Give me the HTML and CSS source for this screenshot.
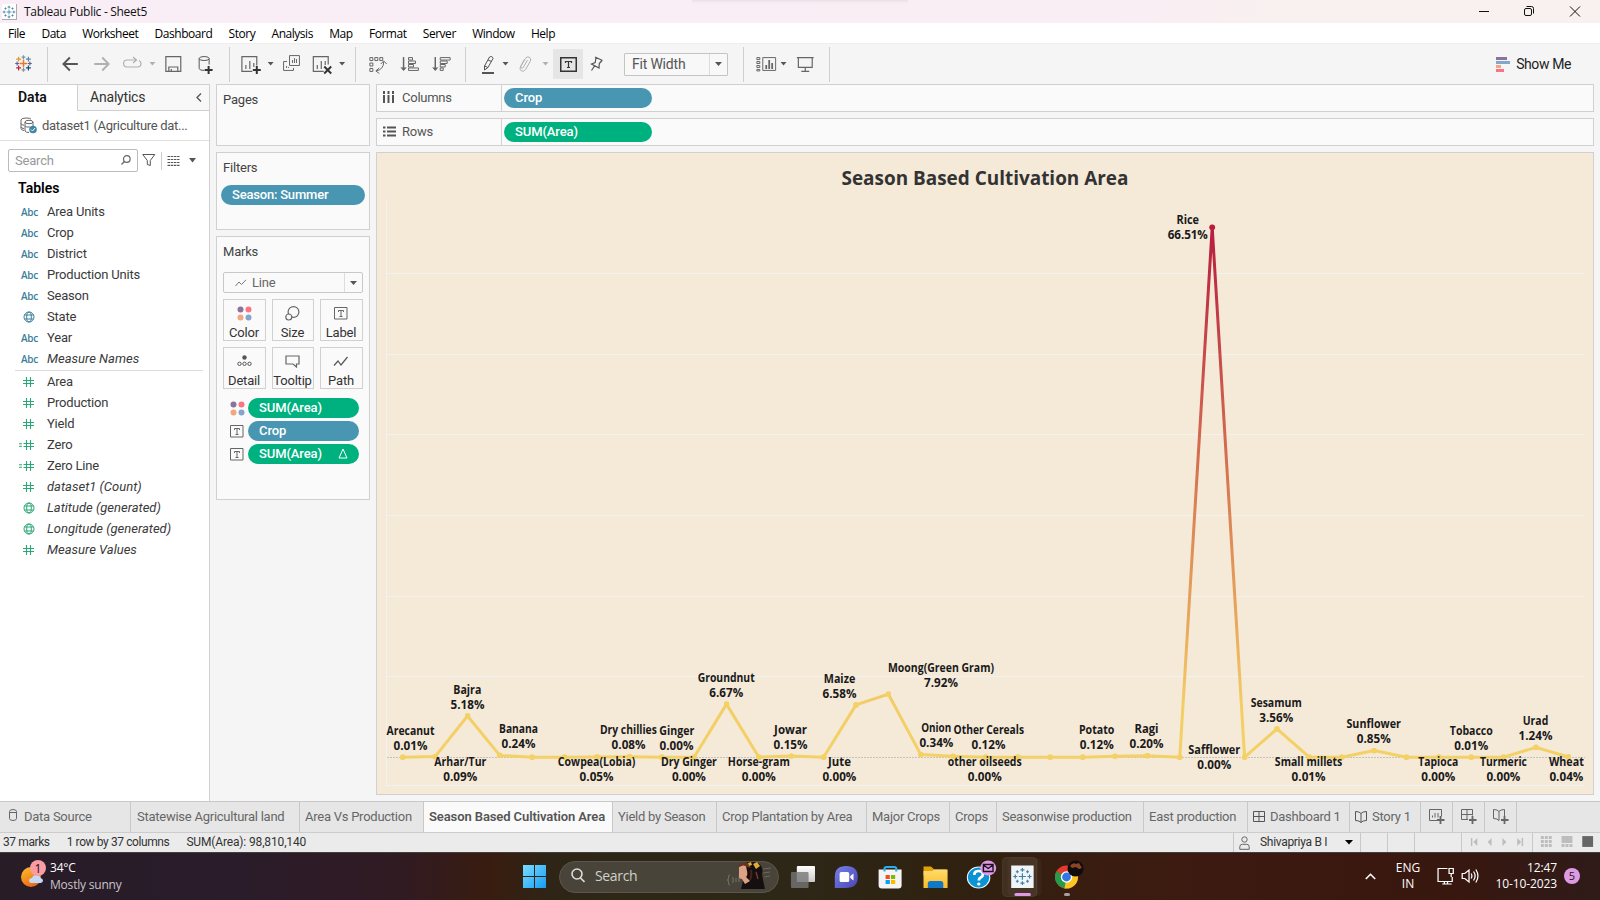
FILE: index.html
```html
<!DOCTYPE html>
<html lang="en">
<head>
<meta charset="utf-8">
<title>Tableau Public - Sheet5</title>
<link rel="stylesheet" href="styles.css">
</head>
<body>
<svg class="defs" width="0" height="0" aria-hidden="true">
  <defs>
    <symbol id="globe" viewBox="0 0 12 12"><g fill="none" stroke="currentColor" stroke-width="1"><circle cx="6" cy="6" r="5"/><ellipse cx="6" cy="6" rx="2.3" ry="5"/><path d="M1.5 4h9M1.5 8h9"/></g></symbol>
    <symbol id="hash" viewBox="0 0 16 12"><path d="M7.5 1v10M11.5 1v10M4 4.500h11M4 7.500h11" fill="none" stroke="currentColor" stroke-width="1.1"/></symbol>
    <symbol id="eqhash" viewBox="0 0 16 12"><path d="M7.500 1v10M11.500 1v10M4.500 4.500h10.500M4.500 7.500h10.500M0 4.800h3M0 7.200h3" fill="none" stroke="currentColor" stroke-width="1.100"/></symbol>
    <symbol id="dots4" viewBox="0 0 15 15"><circle cx="3.500" cy="3.500" r="3" fill="#8b7399"/><circle cx="11.500" cy="3.500" r="3" fill="#fc7384"/><circle cx="3.500" cy="11.500" r="3" fill="#f2a77e"/><circle cx="11.500" cy="11.500" r="3" fill="#84a5cd"/></symbol>
    <symbol id="tbox" viewBox="0 0 14 13"><path d="M.5.500h12.500v11.500H.5zM4.500 5V3.500h5V5M7 3.500v6M5.500 9.500h3" fill="none" stroke="#666"/></symbol>
    <symbol id="cluster" viewBox="0 0 20 20"><path d="M10 6.500v7M6.500 10h7M10 1v4M8 3h4M10 15v4M8 17h4M3 8v4M1 10h4M17 8v4M15 10h4M5 3.500v3M3.500 5h3M15 3.500v3M13.500 5h3M5 13.500v3M3.500 15h3M15 13.500v3M13.500 15h3" stroke="#3f83a8" stroke-width="1.200" fill="none"/></symbol>
  </defs>
</svg>

<header class="titlebar">
  <span class="app-icon"><svg width="14" height="14"><use href="#cluster"/></svg></span>
  <span class="app-title">Tableau Public - Sheet5</span>
  <i class="snap-hint"></i>
  <svg class="win-controls" width="120" height="22" viewBox="1470 0 120 22" fill="none" stroke="#111">
    <path d="M1479 10.500h10M1570 5.500l10 10M1580 5.500l-10 10"/><rect x="1524.500" y="7.500" width="7" height="7" rx="1.500"/><path d="M1526.500 5.500h5q2 0 2 2v5"/>
  </svg>
</header>
<nav class="menubar"><span>File</span><span>Data</span><span>Worksheet</span><span>Dashboard</span><span>Story</span><span>Analysis</span><span>Map</span><span>Format</span><span>Server</span><span>Window</span><span>Help</span></nav>

<div class="toolbar">
  <svg class="tool-group" width="48" height="35" viewBox="-.5 47 48 35" fill="none" stroke-width="1.200">
    <path d="M23.500 59.500v8M19.500 63.500h8" stroke="#e8762c" stroke-width="1.500"/>
    <path d="M23.500 55v4M21.500 57h4" stroke="#7099a6"/><path d="M23.500 68v4M21.500 70h4" stroke="#7099a6"/>
    <path d="M17 61.500v4M15 63.500h4M30 61.500v4M28 63.500h4" stroke="#5b6591"/>
    <path d="M18.500 56.500v5M16 59h5" stroke="#eb9129"/><path d="M28.500 56.500v5M26 59h5" stroke="#59879b"/>
    <path d="M18.500 65.500v5M16 68h5" stroke="#c72035"/><path d="M28.500 65.500v5M26 68h5" stroke="#1f447e"/>
  </svg>
  <svg class="tool-group" width="182" height="35" viewBox="48 47 182 35" fill="none" stroke="#555">
    <path d="M78 64H63.500M70 57.500L63.500 64l6.500 6.500" stroke-width="1.900"/>
    <path d="M94.500 64h14.500M102.500 57.500l6.500 6.500-6.500 6.500" stroke="#b0b0b0" stroke-width="1.900"/>
    <path d="M137 60h-9.500q-3.500 0-3.500 3.500t3.500 3.500H138q3.500 0 3.500-3.500 0-2-2-3M133.500 57l3.500 3-3.500 3" stroke="#b0b0b0" stroke-width="1.200"/>
    <path d="M150 62h6l-3 3.500z" fill="#b0b0b0" stroke="none"/>
    <path d="M166.500 56.500h15v15h-15zM169.500 71.500v-4.500h9v4.500M172 69v2.500" stroke="#666" stroke-width="1.200"/>
    <ellipse cx="205" cy="58.500" rx="5" ry="2"/><path d="M200 58.500v10q0 2 5 2M210 58.500v6"/><path d="M209.500 66v8M205.500 70h8" stroke="#333" stroke-width="2"/>
  </svg>
  <svg class="tool-group" width="126" height="35" viewBox="229.500 47 126 35" fill="none" stroke="#666">
    <path d="M252 71.500h-10.500v-15h15v9M245.500 65v4M249.500 61v8M253.500 63v4" stroke-width="1.200"/><path d="M256.500 66v8M252.500 70h8" stroke="#333" stroke-width="2"/>
    <path d="M267.500 62h6l-3 3.500zM339.500 62h6l-3 3.500z" fill="#555" stroke="none"/>
    <path d="M289.500 55.500h10v10h-10zM292.500 60v3M294.500 58v5M296.500 59v4M287 61.500h-3.500v9h10V68M286.500 66v2M288.500 67v1"/>
    <path d="M324 71.500h-10.500v-15h15v8M317.500 65v4M321.500 61v8M325.500 61v4" stroke-width="1.200"/><path d="M324.500 66.500l7 7M331.500 66.500l-7 7" stroke="#333" stroke-width="2"/>
  </svg>
  <svg class="tool-group" width="110" height="35" viewBox="355.500 47 110 35" fill="none" stroke="#666">
    <path d="M369.500 57.500h3v3h-3zM374.500 57.500h3v3h-3zM379.500 57.500h3v3h-3zM369.500 63h3v3h-3zM369.500 68.500h3v3h-3zM383.500 61.500q0 8-7.500 9.500M380.500 64l3-3 3 3M379 68l-3.500 3 3.500 2.500"/>
    <path d="M403.500 57v12" stroke-width="1.500"/><path d="M401 67.500l2.500 3 2.500-3" fill="#666"/>
    <path d="M408.500 57.500h4v2.500h-4zM408.500 61h7v2.500h-7zM408.500 64.500h5v2.500h-5zM408.500 68h10v2.500h-10z"/>
    <path d="M435.500 57v12" stroke-width="1.500"/><path d="M433 67.500l2.500 3 2.500-3" fill="#666"/>
    <path d="M440.500 57.500h10v2.500h-10zM440.500 61h7v2.500h-7zM440.500 64.500h5v2.500h-5zM440.500 68h3v2.500h-3z"/>
  </svg>
  <svg class="tool-group" width="86" height="35" viewBox="466 47 86 35" fill="none" stroke="#555">
    <path d="M484.500 66l5-9q3-1.500 3.500 1.500l-5 9-3.500 2.500zM484.500 66l3.500 1.500M488 60l3.500 1.500"/><path d="M482 73h12" stroke-width="2"/>
    <path d="M502.500 62h6l-3 3.500z" fill="#555" stroke="none"/><path d="M542.500 62h6l-3 3.500z" fill="#b0b0b0" stroke="none"/>
    <path d="M527.500 60l-4 7q-1 2-2.200 1-1-1 0-2.500l4-7q1.800-2.500 4-1.300 2.200 1.500 1 4l-4.500 8q-2 3-4.500 1.700-2.200-1.500-.8-4.400l4-7" stroke="#b0b0b0"/>
  </svg>
  <div class="tool-pressed"><svg width="17" height="15" viewBox="0 0 17 15" fill="none" stroke="#333"><path d="M.75.750h15.500v13.500H.75z" stroke-width="1.500"/><path d="M5.500 6V4.500h6V6M8.500 4.500v6M7 10.500h3" stroke-width="1.200"/></svg></div>
  <svg class="tool-pin" width="14" height="16" viewBox="0 0 14 16" fill="none" stroke="#555"><path d="M5 1l7.500 3.500M6 1.500l-.8 5L1.500 8l7.500 4 .3-4.500L12 4.500M4.500 10L1.500 14.500" stroke-width="1.200"/></svg>
  <div class="fit-select"><span>Fit Width</span><b><svg width="7" height="4"><path d="M0 0h7l-3.500 4z" fill="#555"/></svg></b></div>
  <i class="tool-sep"></i>
  <svg class="tool-group" width="86" height="35" viewBox="743.5 47 86 35" fill="none" stroke="#666">
    <path d="M756.500 57.500h3v2h-3zM756.500 61.500h3v2h-3zM756.500 65.500h3v2h-3zM756.500 69.500h3v1.500h-3zM762.500 57.500h13v13h-13z"/><path d="M766 65v4M769 60v9M772 63v6" stroke-width="1.800"/>
    <path d="M780.500 62h6l-3 3.500z" fill="#555" stroke="none"/>
    <path d="M797 57.500h17M798.500 58v9.500h14V58M805.500 67.500v4M801.500 71.500h8" stroke-width="1.200"/>
  </svg>
  <div class="show-me"><svg width="14" height="15"><path d="M0 0h11v3H0z" fill="#8b7399"/><path d="M0 4h14v3H0z" fill="#84a5cd"/><path d="M0 8h5v3H0z" fill="#f2a77e"/><path d="M0 12h8v3H0z" fill="#fc7384"/></svg><span>Show Me</span></div>
</div>

<main class="workspace">
  <aside class="data-pane">
    <div class="pane-tabs"><b>Data</b><div><span>Analytics</span><svg width="6" height="9"><path d="M5 .5L1 4.500l4 4" fill="none" stroke="#555" stroke-width="1.300"/></svg></div></div>
    <div class="dataset">
      <svg width="18" height="17" viewBox="0 0 18 17" fill="none" stroke="#666"><path d="M4 13.500q-3-.3-3-2V2.800M1 3q0-2 5-2t5 1.200M1 6.500q0 1.500 3 1.700M1 10q0 1.300 3 1.500"/><ellipse cx="9" cy="5" rx="4" ry="1.700"/><path d="M5 5v9q1 1.500 4 1.500M13 5v4M5 9q1 1.500 5 1"/><circle cx="13" cy="12.500" r="3.800" fill="#3c87a5" stroke="none"/><path d="M11 12.500l1.500 1.500 2.500-3" stroke="#fff"/></svg>
      <span>dataset1 (Agriculture dat...</span>
    </div>
    <div class="search-row">
      <div class="search-box"><span>Search</span><svg width="10" height="11" fill="none" stroke="#666" stroke-width="1.200"><circle cx="5.800" cy="4" r="3.300"/><path d="M3.300 6.500L.5 9.500"/></svg></div>
      <svg width="14" height="13" fill="none" stroke="#555"><path d="M.8.500h12L8.300 6.500v5L5.300 10.500v-4z"/></svg>
      <i></i>
      <svg width="13" height="10"><path d="M.5.500h12M.5 3.500h12M.5 6.500h12M.5 9.300h12" stroke="#555" stroke-width="1.200" stroke-dasharray="2.500 .7"/></svg>
      <svg width="7" height="5"><path d="M0 0h7l-3.500 4.500z" fill="#555"/></svg>
    </div>
    <h3>Tables</h3>
    <ul class="fields dims">
      <li><b>Abc</b>Area Units</li><li><b>Abc</b>Crop</li><li><b>Abc</b>District</li><li><b>Abc</b>Production Units</li><li><b>Abc</b>Season</li>
      <li><svg class="gl"><use href="#globe"/></svg>State</li><li><b>Abc</b>Year</li><li class="it"><b>Abc</b>Measure Names</li>
    </ul>
    <ul class="fields measures">
      <li><svg class="ha"><use href="#hash"/></svg>Area</li><li><svg class="ha"><use href="#hash"/></svg>Production</li><li><svg class="ha"><use href="#hash"/></svg>Yield</li>
      <li><svg class="ha"><use href="#eqhash"/></svg>Zero</li><li><svg class="ha"><use href="#eqhash"/></svg>Zero Line</li>
      <li class="it"><svg class="ha"><use href="#hash"/></svg>dataset1 (Count)</li><li class="it"><svg class="gl"><use href="#globe"/></svg>Latitude (generated)</li><li class="it"><svg class="gl"><use href="#globe"/></svg>Longitude (generated)</li><li class="it"><svg class="ha"><use href="#hash"/></svg>Measure Values</li>
    </ul>
  </aside>

  <section class="cards">
    <div class="card pages"><h4>Pages</h4></div>
    <div class="card filters"><h4>Filters</h4><span class="pill blue">Season: Summer</span></div>
    <div class="card marks">
      <h4>Marks</h4>
      <div class="mark-type"><svg width="12" height="8"><path d="M.5 7L4 3l2.500 2.500L11 .8" fill="none" stroke="#777"/></svg><span>Line</span><b><svg width="7" height="4"><path d="M0 0h7l-3.500 4z" fill="#555"/></svg></b></div>
      <div class="mark-grid">
        <div><svg width="15" height="15"><use href="#dots4"/></svg><span>Color</span></div>
        <div><svg width="15" height="15" fill="none" stroke="#666" stroke-width="1.200"><circle cx="8.500" cy="6" r="5.400"/><circle cx="3.800" cy="11" r="3" fill="#fafafa"/></svg><span>Size</span></div>
        <div><svg width="14" height="13"><use href="#tbox"/></svg><span>Label</span></div>
        <div><svg width="15" height="12" fill="none" stroke="#555"><circle cx="7.500" cy="2.500" r="2.200" fill="#555" stroke="none"/><circle cx="2.500" cy="8.800" r="1.700"/><circle cx="7.500" cy="8.800" r="1.700"/><circle cx="12.500" cy="8.800" r="1.700"/></svg><span>Detail</span></div>
        <div><svg width="15" height="13" fill="none" stroke="#666" stroke-width="1.200"><path d="M1 1h13v8h-2.500v3L8 9H1z"/></svg><span>Tooltip</span></div>
        <div><svg width="16" height="11"><path d="M1 9.500l4-4.500 3 4 6.500-8" fill="none" stroke="#555" stroke-width="1.200"/></svg><span>Path</span></div>
      </div>
      <div class="mark-pills">
        <svg width="15" height="15"><use href="#dots4"/></svg><span class="pill green">SUM(Area)</span>
        <svg width="14" height="13"><use href="#tbox"/></svg><span class="pill blue">Crop</span>
        <svg width="14" height="13"><use href="#tbox"/></svg><span class="pill green">SUM(Area)<svg width="10" height="11"><path d="M1 10L5 1l4 9z" fill="none" stroke="#fff"/></svg></span>
      </div>
    </div>
  </section>

  <section class="view">
    <div class="shelf"><div class="shelf-name"><svg width="11" height="13"><path d="M1 0v3M1 4v8M5.500 0v3M5.500 4v8M10 0v3M10 4v8" stroke="#555" stroke-width="2"/></svg>Columns</div><span class="pill blue">Crop</span></div>
    <div class="shelf"><div class="shelf-name rows"><svg width="13" height="11"><path d="M0 1.500h2.500M4 1.500h9M0 5.500h2.500M4 5.500h9M0 9.500h2.500M4 9.500h9" stroke="#555" stroke-width="2"/></svg>Rows</div><span class="pill green">SUM(Area)</span></div>
    <div class="viz">
      <svg class="chart" width="1216" height="641" viewBox="377 153 1216 641">
        <defs>
          <linearGradient id="heat" gradientUnits="userSpaceOnUse" x1="0" y1="757" x2="0" y2="227"><stop offset="0" stop-color="#f4d166"/><stop offset=".1" stop-color="#f3cd65"/><stop offset=".25" stop-color="#e8a95c"/><stop offset=".5" stop-color="#d97c52"/><stop offset=".75" stop-color="#c84b49"/><stop offset="1" stop-color="#b71d3e"/></linearGradient>
          <marker id="dot" markerUnits="userSpaceOnUse" markerWidth="6" markerHeight="6" refX="3" refY="3"><circle cx="3" cy="3" r="2.900" fill="#f4d166"/></marker>
        </defs>
        <text class="viz-title" x="985" y="185" textLength="287" lengthAdjust="spacingAndGlyphs">Season Based Cultivation Area</text>
        <path class="grid" d="M386.500 200V785.500H1585M387 273.500H1585M387 354.500H1585M387 434.500H1585M387 515.500H1585M387 596.500H1585M387 676.500H1585"/>
        <path class="zero" d="M387 757.500H1585"/>
        <polyline class="series" stroke="url(#heat)" marker-start="url(#dot)" marker-mid="url(#dot)" marker-end="url(#dot)" points="402.700,757.200 435.100,756.600 467.500,716 499.800,755.400 532.200,757.200 564.600,757.200 597,756.900 629.400,756.700 661.700,757.200 694.100,757.200 726.500,704.100 758.900,757.200 791.300,756.100 823.600,757.200 856,704.900 888.400,694.200 920.800,754.600 953.200,756.300 985.500,757.200 1017.900,757.200 1050.300,757.200 1082.700,757.200 1115,756.300 1147.400,755.700 1179.800,757.200 1212.200,227.300 1244.600,757.200 1277,728.900 1309.300,757.200 1341.700,757.200 1374.100,750.500 1406.500,757.200 1438.900,757.200 1471.200,757.200 1503.600,757.200 1536,747.400 1568.400,757"/>
        <circle cx="1212.200" cy="227.300" r="2.900" fill="#b71d3e"/>
        <g class="labels">
          <text x="410.500" y="735" textLength="48" lengthAdjust="spacingAndGlyphs">Arecanut</text><text x="410.500" y="750" textLength="34">0.01%</text>
          <text x="467.300" y="694" textLength="28" lengthAdjust="spacingAndGlyphs">Bajra</text><text x="467.500" y="709" textLength="34">5.18%</text>
          <text x="460.300" y="766" textLength="52" lengthAdjust="spacingAndGlyphs">Arhar/Tur</text><text x="460.300" y="781" textLength="34">0.09%</text>
          <text x="518.500" y="733" textLength="39" lengthAdjust="spacingAndGlyphs">Banana</text><text x="518.500" y="748" textLength="34">0.24%</text>
          <text x="596.600" y="766" textLength="77.500" lengthAdjust="spacingAndGlyphs">Cowpea(Lobia)</text><text x="596.600" y="781" textLength="34">0.05%</text>
          <text x="628.400" y="734" textLength="57" lengthAdjust="spacingAndGlyphs">Dry chillies</text><text x="628.600" y="749" textLength="34">0.08%</text>
          <text x="676.800" y="735" textLength="35" lengthAdjust="spacingAndGlyphs">Ginger</text><text x="676.500" y="750" textLength="34">0.00%</text>
          <text x="688.900" y="766" textLength="56" lengthAdjust="spacingAndGlyphs">Dry Ginger</text><text x="688.900" y="781" textLength="34">0.00%</text>
          <text x="726.200" y="682" textLength="57" lengthAdjust="spacingAndGlyphs">Groundnut</text><text x="726.200" y="697" textLength="34">6.67%</text>
          <text x="758.800" y="766" textLength="62" lengthAdjust="spacingAndGlyphs">Horse-gram</text><text x="758.800" y="781" textLength="34">0.00%</text>
          <text x="790.600" y="734" textLength="33" lengthAdjust="spacingAndGlyphs">Jowar</text><text x="790.600" y="749" textLength="34">0.15%</text>
          <text x="839.400" y="766" textLength="23" lengthAdjust="spacingAndGlyphs">Jute</text><text x="839.400" y="781" textLength="34">0.00%</text>
          <text x="839.500" y="683" textLength="31.500" lengthAdjust="spacingAndGlyphs">Maize</text><text x="839.500" y="698" textLength="34">6.58%</text>
          <text x="941" y="672" textLength="106" lengthAdjust="spacingAndGlyphs">Moong(Green Gram)</text><text x="941" y="687" textLength="34">7.92%</text>
          <text x="936.200" y="732" textLength="30" lengthAdjust="spacingAndGlyphs">Onion</text><text x="936.400" y="747" textLength="34">0.34%</text>
          <text x="988.800" y="734" textLength="70.500" lengthAdjust="spacingAndGlyphs">Other Cereals</text><text x="988.500" y="749" textLength="34">0.12%</text>
          <text x="984.700" y="766" textLength="74" lengthAdjust="spacingAndGlyphs">other oilseeds</text><text x="984.700" y="781" textLength="34">0.00%</text>
          <text x="1096.700" y="734" textLength="35.500" lengthAdjust="spacingAndGlyphs">Potato</text><text x="1096.700" y="749" textLength="34">0.12%</text>
          <text x="1146.500" y="733" textLength="24" lengthAdjust="spacingAndGlyphs">Ragi</text><text x="1146.500" y="748" textLength="34">0.20%</text>
          <text x="1187.800" y="224" textLength="22.500" lengthAdjust="spacingAndGlyphs">Rice</text><text x="1187.800" y="239" textLength="40">66.51%</text>
          <text x="1214.300" y="754" textLength="52" lengthAdjust="spacingAndGlyphs">Safflower</text><text x="1214.300" y="769" textLength="34">0.00%</text>
          <text x="1276.200" y="707" textLength="51" lengthAdjust="spacingAndGlyphs">Sesamum</text><text x="1276.200" y="722" textLength="34">3.56%</text>
          <text x="1308.600" y="766" textLength="67.500" lengthAdjust="spacingAndGlyphs">Small millets</text><text x="1308.600" y="781" textLength="34">0.01%</text>
          <text x="1373.700" y="728" textLength="54.500" lengthAdjust="spacingAndGlyphs">Sunflower</text><text x="1373.700" y="743" textLength="34">0.85%</text>
          <text x="1438.300" y="766" textLength="40" lengthAdjust="spacingAndGlyphs">Tapioca</text><text x="1438.300" y="781" textLength="34">0.00%</text>
          <text x="1471.300" y="735" textLength="43" lengthAdjust="spacingAndGlyphs">Tobacco</text><text x="1471.300" y="750" textLength="34">0.01%</text>
          <text x="1503.400" y="766" textLength="47" lengthAdjust="spacingAndGlyphs">Turmeric</text><text x="1503.400" y="781" textLength="34">0.00%</text>
          <text x="1535.500" y="725" textLength="25.500" lengthAdjust="spacingAndGlyphs">Urad</text><text x="1535.500" y="740" textLength="34">1.24%</text>
          <text x="1566.400" y="766" textLength="35" lengthAdjust="spacingAndGlyphs">Wheat</text><text x="1566.400" y="781" textLength="34">0.04%</text>
        </g>
      </svg>
    </div>
  </section>
</main>

<div class="sheet-tabs">
  <span class="source"><svg width="8" height="12" fill="none" stroke="#666"><path d="M.5 2.500q0-2 3.500-2t3.500 2v7q0 2-3.500 2t-3.500-2zM.5 3.500h7"/></svg>Data Source</span>
  <span>Statewise Agricultural land</span><span>Area Vs Production</span><span class="active">Season Based Cultivation Area</span><span>Yield by Season</span><span>Crop Plantation by Area</span><span>Major Crops</span><span>Crops</span><span>Seasonwise production</span><span>East production</span>
  <span><svg width="12" height="11" fill="none" stroke="#555"><path d="M.5.500h11v10H.5zM6 .5v10M.5 5.500h11"/></svg>Dashboard 1</span>
  <span><svg width="12" height="12" fill="none" stroke="#555"><path d="M6 2.500Q4.500.500.5.500v9q4 0 5.500 2 1.500-2 5.500-2v-9q-4 0-5.500 2zM6 2.500v9"/></svg>Story 1</span>
  <span class="new"><svg width="16" height="15" fill="none" stroke="#666"><path d="M8 11.500H.5V.5h12v7M3.500 6.500v2M6 4v4.500M9 4v4.500"/><path d="M11.500 7v8M8 11h7.500" stroke-width="1.800"/></svg></span>
  <span class="new"><svg width="16" height="15" fill="none" stroke="#666"><path d="M7 10.500H.5V.5h11v6M6 .5v10M.5 5.500h11"/><path d="M11.500 7v8M8 11h7.500" stroke-width="1.800"/></svg></span>
  <span class="new"><svg width="16" height="15" fill="none" stroke="#666"><path d="M6 2.500Q4.500.500.5.500v9q4 0 5.500 2M6 2.500q1.500-2 5.500-2V7M6 2.500v9"/><path d="M11.500 7v8M8 11h7.500" stroke-width="1.800"/></svg></span>
  <span class="rest"></span>
</div>

<footer class="status">
  <span>37 marks</span><span>1 row by 37 columns</span><span>SUM(Area): 98,810,140</span>
  <div class="status-cells">
    <div class="user"><svg width="11" height="14" fill="none" stroke="#666"><circle cx="5.500" cy="3.500" r="2.700"/><path d="M.8 13.300v-2.500q0-2.500 2.500-2.500h4.400q2.500 0 2.500 2.500v2.500z"/></svg><span>Shivapriya B I</span><svg width="8" height="5"><path d="M0 0h8l-4 4.500z"/></svg></div>
    <i></i><i></i><i></i>
    <svg width="71" height="19" viewBox="1462 833 71 19" fill="#bdbdbd"><path d="M1471 838h1.500v8h-1.500zM1477.500 838v8l-4-4zM1492 838v8l-4-4zM1503 838l4 4-4 4zM1518 838l4 4-4 4zM1522.500 838h1.500v8h-1.500z"/></svg>
    <svg width="67" height="19" viewBox="1533 833 67 19" fill="#bdbdbd"><path d="M1541 836h3v3h-3zM1545 836h3v3h-3zM1549 836h3v3h-3zM1541 840h3v3h-3zM1545 840h3v3h-3zM1549 840h3v3h-3zM1541 844h3v3h-3zM1545 844h3v3h-3zM1549 844h3v3h-3zM1562 836h11v7h-11zM1562 844h3v3h-3zM1566 844h3v3h-3zM1570 844h3v3h-3z"/><path d="M1583 836h11v11h-11z" fill="#666"/></svg>
  </div>
</footer>

<div class="taskbar">
  <div class="weather">
    <svg width="26" height="29" viewBox="20 857 26 29"><defs><linearGradient id="sun" x1="0" y1="0" x2=".5" y2="1"><stop stop-color="#fbc12d"/><stop offset="1" stop-color="#ee6a13"/></linearGradient></defs><circle cx="31" cy="875" r="10" fill="url(#sun)"/><path d="M31 881q-2-.5-2-2.500 0-2.500 3-2.500 1-3 4.500-3t4 3q2.500.5 2.500 2.500t-2.500 2.500z" fill="#c3d9f8"/><circle cx="38" cy="866" r="8" fill="#fb9ba4"/><text x="38" y="870.500" class="count">1</text></svg>
    <div><span>34°C</span><span class="dim">Mostly sunny</span></div>
  </div>
  <svg class="start" width="23" height="23" viewBox="0 0 23 23"><defs><linearGradient id="win" x1="0" y1="0" x2="1" y2="1"><stop stop-color="#7bdcff"/><stop offset="1" stop-color="#159cf5"/></linearGradient></defs><path d="M0 0h11v11H0zM12 0h11v11H12zM0 12h11v11H0zM12 12h11v11H12z" fill="url(#win)"/></svg>
  <div class="task-search">
    <svg width="14" height="15" fill="none" stroke="#ddd" stroke-width="1.600"><circle cx="6" cy="6" r="5"/><path d="M9.500 10l4 4"/></svg><span>Search</span>
    <svg class="portrait" width="47" height="28" viewBox="711 862 47 28"><path d="M715 875q-2 0-1.500 2.500t-1.500 2.500q2 0 1.500 2.500t1.500 2.500M718 877v6M721 878v4M724 877v5" fill="none" stroke="#77736a"/><path d="M748 869l8-1M748 873l7-1M749 877l6-1" stroke="#6d675c"/><path d="M729 864q6-4 14-1 6 4 4 11 1 7 3 15h-24l2-8z" fill="#15100f"/><path d="M724 867q3-3 7-1l1 5q1 4-1 6l4 4-5 3-3-5q-4 0-3-5z" fill="#dda283"/><path d="M723 866q4-4 10-3l3 5-4-1-3-2-5 2z" fill="#6a321e"/><path d="M738 864l4-2 3 4-4 3z" fill="#dfaa36"/><path d="M733 863l3-1 1 3-3 1z" fill="#dfaa36"/><path d="M736 870q1 6-1 10" stroke="#4a2318" stroke-width="2" fill="none"/><path d="M741 872l2 7" stroke="#7c4430" stroke-width="1.200"/></svg>
  </div>
  <svg class="task-icons" width="263" height="44" viewBox="766 854 246 44" preserveAspectRatio="none">
    <defs>
      <linearGradient id="tv1" x1="0" y1="0" x2="0" y2="1"><stop stop-color="#fff"/><stop offset="1" stop-color="#c9c9c9"/></linearGradient>
      <linearGradient id="chat" x1="0" y1="0" x2="1" y2="1"><stop stop-color="#7682e8"/><stop offset="1" stop-color="#4b45b4"/></linearGradient>
      <linearGradient id="fold" x1="0" y1="0" x2="0" y2="1"><stop stop-color="#ffdc6d"/><stop offset="1" stop-color="#fcbb25"/></linearGradient>
    </defs>
    <rect x="778" y="865" width="17" height="16" rx="1" fill="url(#tv1)"/><rect x="772.500" y="871" width="16.500" height="16" rx="1" fill="#777" opacity=".8"/>
    <path d="M824 865q11 0 11 11t-11 11h-10.500v-11q0-11 10.500-11z" fill="url(#chat)"/><rect x="818" y="871" width="9" height="10" rx="1.500" fill="#fff"/><path d="M828 875l3-2.500v7l-3-2.500z" fill="#fff"/>
    <path d="M854.500 868.500h21.500v16q0 3-3 3h-15.500q-3 0-3-3z" fill="#f4f4f4"/><path d="M860 870.500v-3q0-1.500 2-1.500h7q2 0 2 1.500v3" fill="none" stroke="#27aef0" stroke-width="2"/><path d="M861 874h4v4h-4z" fill="#f25022"/><path d="M866 874h4v4h-4z" fill="#7fba00"/><path d="M861 879h4v4h-4z" fill="#00a4ef"/><path d="M866 879h4v4h-4z" fill="#ffb900"/>
    <path d="M896.500 865.500h7l3 3h11v6h-21z" fill="#e0a010"/><path d="M896.500 870h8l2-1.500h12.500v18.500h-22.500z" fill="url(#fold)"/><path d="M900.500 887v-4.500q0-2.500 2.500-2.500h9.500q2.500 0 2.500 2.500v4.500z" fill="#1178c9"/>
    <circle cx="948" cy="876.500" r="10.500" fill="#0a93d5" stroke="#eaf6fc"/><path d="M944 874q0-4 4-4t4 3.500q0 2-2 3-1.800 1-1.800 3" fill="none" stroke="#fff" stroke-width="2.600"/><circle cx="948.200" cy="883" r="1.600" fill="#fff"/>
    <circle cx="957" cy="867" r="7.500" fill="#de9be4"/><path d="M952.500 863.500h9v7h-9zM952.500 864l4.500 3.500 4.500-3.500" fill="none" stroke="#1d1320" stroke-width="1.300"/>
    <rect x="975" y="857" width="32" height="38" rx="4" fill="#fff" opacity=".03"/><rect x="970.500" y="856.500" width="32" height="39" rx="4" fill="#fff" fill-opacity=".07" stroke="#fff" stroke-opacity=".09"/>
    <rect x="978.500" y="864.500" width="21" height="22.500" fill="#f2f5f7"/><svg x="979.500" y="866" width="19" height="19"><use href="#cluster"/></svg><rect x="981.500" y="892" width="15.500" height="3" rx="1.500" fill="#de9be4"/>
  </svg>
  <svg class="chrome" width="32" height="44" viewBox="1052 854 32 44">
    <circle cx="1066.500" cy="876" r="11.500" fill="#e33b2e"/><path d="M1066.500 876L1056.500 870.200A11.500 11.500 0 0 0 1065 887.400z" fill="#289b4a"/><path d="M1066.500 876h11.500A11.500 11.500 0 0 1 1064.500 887.400z" fill="#fbc624"/><path d="M1067 871h10.300a11.500 11.500 0 0 1 .7 5h-7z" fill="#fbc624"/><circle cx="1066.500" cy="876" r="5.700" fill="#fff"/><circle cx="1066.500" cy="876" r="4.400" fill="#3276e6"/>
    <circle cx="1075.500" cy="867.500" r="8" fill="#110b0b"/><path d="M1070 865q3-4 6-2l3-1 3 5-3 1-3-2-4 1z" fill="#8a4527"/><rect x="1064" y="892" width="6" height="3" rx="1.500" fill="#a7a09c"/>
  </svg>
  <div class="tray">
    <svg class="chev" width="11" height="7"><path d="M.8 6l4.700-4.700L10.200 6" fill="none" stroke="#fff" stroke-width="1.600"/></svg>
    <div class="lang"><span>ENG</span><span>IN</span></div>
    <svg width="42" height="18" viewBox="1418 867 40 18" preserveAspectRatio="none" fill="none" stroke="#fff" stroke-width="1.200"><path d="M1428 868.500h-9v13h13.500V877M1423 884h9M1425 882v2M1428 882v2M1429.500 868.500h4v5h-4zM1431.500 874v3"/><path d="M1442 873.500h2.500l4-3.500v12l-4-3.500h-2.500zM1450.500 873.500q1.500 2.500 0 5M1452.800 871.500q3 4.500 0 9M1455 869.500q4 6.500 0 13"/></svg>
    <div class="clock"><span>12:47</span><span>10-10-2023</span></div>
    <b class="notify">5</b>
  </div>
</div>
</body>
</html>
```
FILE: styles.css
```css
* { box-sizing: border-box; }
body { margin: 0; width: 1600px; height: 900px; overflow: hidden; display: flex; flex-direction: column; background: #f5f5f5; font: 13px/1 Roboto, "Open Sans", sans-serif; color: #333; }
svg { display: block; flex: none; }
span { white-space: nowrap; }
h3, h4, ul { margin: 0; padding: 0; font-weight: 400; }
.defs { position: absolute; }

.titlebar { position: relative; height: 23px; flex: none; display: flex; align-items: center; background: linear-gradient(90deg, #f9eef6 0%, #f9eef4 70%, #f9f0f0 80%); font: 12px/16px "Open Sans", sans-serif; color: #111; }
.app-icon { width: 15px; height: 16px; margin-left: 2px; background: #fff; border-right: 1px solid #aaa; border-bottom: 1px solid #aaa; padding: 1px 0 0 0; }
.app-title { margin-left: 7px; letter-spacing: -.3px; }
.snap-hint { position: absolute; left: 692px; top: 0; width: 216px; height: 1px; background: #ebe2e7; box-shadow: 0 1px 2px #e9dfe5; }
.win-controls { margin-left: auto; margin-right: 10px; }
.menubar { height: 20px; flex: none; display: flex; gap: 16.3px; align-items: center; padding: 2px 0 0 8px; background: #fff; font: 12px/16px "Open Sans", sans-serif; letter-spacing: -.47px; color: #000; }

.toolbar { height: 41px; flex: none; display: flex; align-items: center; background: #f5f5f5; border-top: 1px solid #eee; padding-right: 29px; }
.tool-group { border-right: 1px solid #cfcfcf; }
.tool-group:nth-of-type(5) { border-right: 0; }
.tool-pressed { width: 30px; height: 30px; margin-left: 1px; background: #e5e5e5; display: flex; align-items: center; justify-content: center; }
.tool-pin { margin-left: 7px; }
.fit-select { width: 104px; height: 23px; margin-left: 20px; border: 1px solid #c4c4c4; border-radius: 1px; background: #f8f8f8; display: flex; align-items: center; justify-content: space-between; font-size: 14px; letter-spacing: -.2px; color: #555; padding-left: 7px; }
.fit-select span { margin-top: -1px; }
.fit-select b, .mark-type b { height: 100%; width: 18px; border-left: 1px solid #ddd; display: flex; align-items: center; justify-content: center; }
.tool-sep { width: 1px; height: 35px; margin-left: 15px; background: #cfcfcf; }
.show-me { margin-left: auto; display: flex; align-items: center; gap: 6px; font-size: 14px; letter-spacing: -.4px; color: #222; }

.workspace { height: 717px; flex: none; display: grid; grid-template-columns: 210px 154px 1218px; column-gap: 6px; }
.data-pane { height: 717px; background: #fff; border-right: 1px solid #d0d0d0; border-top: 1px solid #d0d0d0; }
.pane-tabs { display: grid; grid-template-columns: 77px 1fr; height: 26px; font-size: 14px; color: #111; }
.pane-tabs b { padding: 5px 0 0 18px; font-weight: 600; }
.pane-tabs div { display: flex; justify-content: space-between; align-items: center; padding: 0 7px 1px 12px; border-left: 1px solid #d0d0d0; border-bottom: 1px solid #d0d0d0; background: #f8f8f8; color: #333; letter-spacing: -.2px; }
.dataset { height: 30px; border-bottom: 1px solid #e0e0e0; display: flex; align-items: center; gap: 4px; padding: 0 0 1px 20px; color: #555; letter-spacing: -.3px; }
.search-row { height: 23px; margin-top: 8px; padding-left: 8px; display: flex; align-items: center; }
.search-box { width: 130px; height: 23px; border: 1px solid #bbb; border-radius: 2px; display: flex; align-items: center; justify-content: space-between; padding: 0 6px 0 6px; margin-right: 4px; color: #999; letter-spacing: -.2px; }
.search-row i { width: 1px; height: 18px; background: #ccc; margin: 0 6px 0 5px; }
.search-row i + svg { margin-right: 9px; }
.search-row svg:nth-of-type(2) { margin-left: -1px; }
.data-pane h3 { height: 29px; padding: 9px 0 0 18px; font-size: 14px; font-weight: 600; color: #000; }
.fields { list-style: none; color: #3a3a3a; letter-spacing: -.2px; }
.fields li { height: 21px; display: flex; align-items: center; padding-left: 47px; white-space: nowrap; }
.fields b { width: 26px; margin-left: -26px; padding-top: 1px; font: 600 10px/12px "Open Sans", sans-serif; letter-spacing: -.3px; color: #3d7f9b; }
.fields li > svg { width: 16px; height: 12px; margin: 0 12px 0 -28px; }
.fields li > svg.gl { width: 12px; margin: 0 12px 0 -24px; }
.dims { height: 170px; margin: 0 6px 0 15px; border-bottom: 1px solid #ddd; }
.dims li { padding-left: 32px; }
.dims svg { color: #3d7f9b; }
.measures svg { color: #2ca777; }
.fields .it { font-style: italic; letter-spacing: 0; }
.fields .it b { font-style: normal; }

.cards { display: flex; flex-direction: column; gap: 6px; }
.card { border: 1px solid #d0d0d0; background: #fafafa; color: #444; letter-spacing: -.2px; }
.card h4 { padding: 8px 0 1px 6px; font-size: 13px; letter-spacing: -.2px; }
.pages { height: 62px; }
.filters { height: 78px; }
.marks { height: 264px; }
.pill { display: flex; align-items: center; justify-content: space-between; height: 20px; border-radius: 10px; padding: 0 11px 1px 11px; color: #fff; font-size: 13px; font-weight: 500; letter-spacing: -.1px; }
.blue { background: #4996b2; }
.green { background: #00b180; }
.filters .pill { margin: 10px 4px 0; letter-spacing: -.2px; }
.mark-type { margin: 13px 6px 0; height: 21px; border: 1px solid #c8c8c8; border-radius: 2px; display: flex; align-items: center; padding-left: 11px; color: #666; }
.mark-type span { margin: 0 auto 0 5px; }
.mark-grid { margin: 6px 6px 0; display: grid; grid-template-columns: 43px 42px 43px; grid-auto-rows: 42px; gap: 6px; }
.mark-grid div { border: 1px solid #d0d0d0; padding-right: 1px; display: grid; grid-template-rows: 26px 12px; justify-items: center; align-items: center; color: #333; }
.mark-pills { margin: 9px 10px 0 13px; display: grid; grid-template-columns: 18px 111px; grid-auto-rows: 20px; row-gap: 3px; align-items: center; }

.view { display: flex; flex-direction: column; gap: 6px; }
.shelf { height: 28px; border: 1px solid #d0d0d0; background: #fafafa; display: flex; align-items: center; }
.shelf-name { width: 125px; height: 26px; border-right: 1px solid #d0d0d0; display: flex; align-items: center; gap: 8px; padding: 0 0 1px 6px; color: #555; letter-spacing: -.25px; }
.shelf-name.rows { gap: 6px; }
.shelf .pill { width: 148px; margin-left: 2px; }
.viz { height: 643px; border: 1px solid #d0d0d0; background: #f5e9d8; }
.viz-title { font: 700 20px "Open Sans", sans-serif; fill: #333; text-anchor: middle; }
.grid { fill: none; stroke: #f3f2f1; stroke-width: 1; }
.zero { stroke: #c6c2bb; stroke-dasharray: 2 1; }
.series { fill: none; stroke-width: 3; stroke-linejoin: round; }
.labels { font: 700 11.7px "Open Sans", sans-serif; fill: #1a1a1a; text-anchor: middle; }

.sheet-tabs { height: 31px; flex: none; display: grid; grid-template-columns: 131px 169px 124px 189px 104px 150px 83px 47px 147px 104px 102px 71px 32px 32px 32px 1fr; border-top: 1px solid #c8c8c8; background: #e6e6e6; color: #666; letter-spacing: -.25px; }
.sheet-tabs span { display: flex; align-items: center; border-right: 1px solid #c8c8c8; padding: 0 0 1px 5px; gap: 5px; }
.sheet-tabs .source { padding-left: 9px; gap: 7px; }
.sheet-tabs .source svg { margin-top: -4px; }
.sheet-tabs .source + span { padding-left: 6px; }
.sheet-tabs .active { background: #fafafa; color: #555; font-weight: 600; padding: 0 0 2px 5px; font-size: 13px; letter-spacing: -.1px; }
.sheet-tabs .new { padding-left: 8px; }
.sheet-tabs .rest { border: 0; }
.status { height: 20px; flex: none; display: flex; align-items: center; gap: 17px; padding-left: 3px; border-top: 1px solid #ccc; background: #ebebeb; font-size: 12px; letter-spacing: -.4px; color: #333; }
.status > span:nth-child(3) { letter-spacing: -.15px; }
.status span { padding-bottom: 1px; }
.status-cells { margin-left: auto; height: 19px; display: grid; grid-template-columns: 127px 27px 27px 47px 71px 68px; align-items: center; }
.status-cells > * { height: 19px; border-left: 1px solid #c8c8c8; }
.user { display: flex; align-items: center; padding-left: 5px; }
.user span { margin-left: 10px; letter-spacing: -.3px; }
.user span + svg { margin: 0 7px 0 auto; }

.taskbar { height: 48px; flex: none; display: flex; align-items: center; border-top: 1px solid #43403a; background: linear-gradient(90deg, #281c27 0, #2a1c2b 230px, #311b23 400px, #391c10 490px, #2e2516 550px, #2d2717 780px, #30200f 980px, #3a1c10 1100px, #3d1a11 1200px, #38170f 1450px, #2f1b19 1600px); font: 12px/16px "Open Sans", sans-serif; color: #fff; }
.weather { display: flex; align-items: center; gap: 4px; width: 523px; padding: 0 0 2px 20px; }
.weather svg { margin-top: -4px; width: 26px; }
.weather div, .lang, .clock { display: flex; flex-direction: column; }
.weather .dim { color: #c9c3c8; }
.weather span { margin-top: 1px; letter-spacing: -.2px; }
.count { font: 12px "Open Sans", sans-serif; text-anchor: middle; fill: #201010; }
.task-search { width: 220px; height: 32px; margin-left: 13px; border-radius: 16px; background: #48443a; border: 1px solid #5a564c; display: flex; align-items: center; padding: 0 5px 2px 11px; font-size: 14px; letter-spacing: -.35px; color: #d2d0ca; }
.task-search span { margin-left: 10px; }
.portrait { margin-left: auto; }
.task-icons { margin-left: 5px; }
.chrome { margin-left: 5px; }
.tray { margin-left: auto; display: flex; align-items: center; padding: 0 20px 1px 0; }
.chev { margin-right: 20px; }
.lang { align-items: center; margin-right: 17px; width: 24px; }
.clock { align-items: flex-end; width: 62px; margin: 0 7px 0 16px; }
.clock span { letter-spacing: -.1px; }
.notify { width: 16px; height: 16px; border-radius: 50%; background: #de9be4; color: #271427; font: 11px/15px "Open Sans", sans-serif; text-align: center; }
```
